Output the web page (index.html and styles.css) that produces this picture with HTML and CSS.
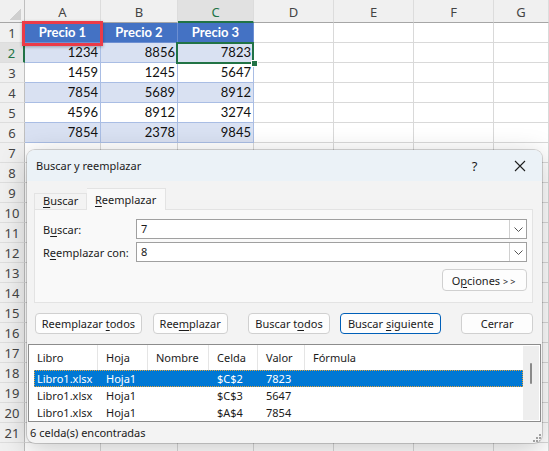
FILE: index.html
```html
<!DOCTYPE html>
<html lang="es">
<head>
    <meta charset="UTF-8">
    <title>Buscar y reemplazar</title>
    <link rel="stylesheet" href="styles.css">
</head>
<body>
    <div class="sheet">
        <div class="row head">
            <div class="corner"></div>
            <div>A</div><div>B</div><div class="sel">C</div><div>D</div><div>E</div><div>F</div><div>G</div>
        </div>
        <div class="row">
            <div class="rh">1</div>
            <div class="tc th">Precio 1</div><div class="tc th">Precio 2</div><div class="tc th">Precio 3</div>
            <div></div><div></div><div></div><div></div>
        </div>
        <div class="row band">
            <div class="rh act">2</div>
            <div class="tc">1234</div><div class="tc">8856</div><div class="tc">7823</div>
            <div></div><div></div><div></div><div></div>
        </div>
        <div class="row">
            <div class="rh">3</div>
            <div class="tc">1459</div><div class="tc">1245</div><div class="tc">5647</div>
            <div></div><div></div><div></div><div></div>
        </div>
        <div class="row band">
            <div class="rh">4</div>
            <div class="tc">7854</div><div class="tc">5689</div><div class="tc">8912</div>
            <div></div><div></div><div></div><div></div>
        </div>
        <div class="row">
            <div class="rh">5</div>
            <div class="tc">4596</div><div class="tc">8912</div><div class="tc">3274</div>
            <div></div><div></div><div></div><div></div>
        </div>
        <div class="row band">
            <div class="rh">6</div>
            <div class="tc">7854</div><div class="tc">2378</div><div class="tc">9845</div>
            <div></div><div></div><div></div><div></div>
        </div>
        <div class="row"><div class="rh">7</div><div></div><div></div><div></div><div></div><div></div><div></div><div></div></div>
        <div class="row"><div class="rh">8</div><div></div><div></div><div></div><div></div><div></div><div></div><div></div></div>
        <div class="row"><div class="rh">9</div><div></div><div></div><div></div><div></div><div></div><div></div><div></div></div>
        <div class="row"><div class="rh">10</div><div></div><div></div><div></div><div></div><div></div><div></div><div></div></div>
        <div class="row"><div class="rh">11</div><div></div><div></div><div></div><div></div><div></div><div></div><div></div></div>
        <div class="row"><div class="rh">12</div><div></div><div></div><div></div><div></div><div></div><div></div><div></div></div>
        <div class="row"><div class="rh">13</div><div></div><div></div><div></div><div></div><div></div><div></div><div></div></div>
        <div class="row"><div class="rh">14</div><div></div><div></div><div></div><div></div><div></div><div></div><div></div></div>
        <div class="row"><div class="rh">15</div><div></div><div></div><div></div><div></div><div></div><div></div><div></div></div>
        <div class="row"><div class="rh">16</div><div></div><div></div><div></div><div></div><div></div><div></div><div></div></div>
        <div class="row"><div class="rh">17</div><div></div><div></div><div></div><div></div><div></div><div></div><div></div></div>
        <div class="row"><div class="rh">18</div><div></div><div></div><div></div><div></div><div></div><div></div><div></div></div>
        <div class="row"><div class="rh">19</div><div></div><div></div><div></div><div></div><div></div><div></div><div></div></div>
        <div class="row"><div class="rh">20</div><div></div><div></div><div></div><div></div><div></div><div></div><div></div></div>
        <div class="row"><div class="rh">21</div><div></div><div></div><div></div><div></div><div></div><div></div><div></div></div>
        <div class="row"><div class="rh"></div><div></div><div></div><div></div><div></div><div></div><div></div><div></div></div>

        <!-- overlays: highlighted header and active cell -->
        <div class="mark"></div>
        <div class="cursor"></div>
        <div class="handle"></div>
    </div>

    <div class="dlg">
        <div class="dlg-title">
            <span class="dlg-name">Buscar y reemplazar</span>
            <span class="tbtn help">?</span>
            <span class="tbtn">
                <svg width="12" height="12" viewBox="0 0 12 12"><path d="M1 1L11 11M11 1L1 11" stroke="#1f1f1f" stroke-width="1.1" fill="none"/></svg>
            </span>
        </div>

        <div class="dlg-main">
            <div class="tabs">
                <div class="tab"><u>B</u>uscar</div>
                <div class="tab on"><u>R</u>eemplazar</div>
            </div>
            <div class="panel">
                <div class="field">
                    <label>B<u>u</u>scar:</label>
                    <div class="combo">
                        <span class="val">7</span>
                        <span class="drop"><svg width="9" height="5" viewBox="0 0 9 5"><path d="M0.5 0.5L4.5 4.5L8.5 0.5" stroke="#555" fill="none"/></svg></span>
                    </div>
                </div>
                <div class="field">
                    <label>R<u>e</u>emplazar con:</label>
                    <div class="combo">
                        <span class="val">8</span>
                        <span class="drop"><svg width="9" height="5" viewBox="0 0 9 5"><path d="M0.5 0.5L4.5 4.5L8.5 0.5" stroke="#555" fill="none"/></svg></span>
                    </div>
                </div>
                <div class="opts">
                    <button class="btn btn-opts">O<u>p</u>ciones <span class="gt">&gt;&gt;</span></button>
                </div>
            </div>
            <div class="actions">
                <button class="btn b-all">Reemplazar <u>t</u>odos</button>
                <button class="btn b-rep">Ree<u>m</u>plazar</button>
                <button class="btn b-find">Buscar t<u>o</u>dos</button>
                <button class="btn b-next">Buscar <u>s</u>iguiente</button>
                <button class="btn b-close">Cerrar</button>
            </div>
        </div>

        <div class="results">
            <div class="res-body">
                <div class="res-head">
                    <span>Libro</span><span>Hoja</span><span>Nombre</span><span>Celda</span><span>Valor</span><span>Fórmula</span>
                </div>
                <div class="res-row sel">
                    <span>Libro1.xlsx</span><span>Hoja1</span><span></span><span>$C$2</span><span>7823</span><span></span>
                </div>
                <div class="res-row">
                    <span>Libro1.xlsx</span><span>Hoja1</span><span></span><span>$C$3</span><span>5647</span><span></span>
                </div>
                <div class="res-row">
                    <span>Libro1.xlsx</span><span>Hoja1</span><span></span><span>$A$4</span><span>7854</span><span></span>
                </div>
            </div>
            <div class="vscroll"><div class="thumb"></div></div>
        </div>

        <div class="status">
            <span>6 celda(s) encontradas</span>
            <svg class="grip" width="10" height="10" viewBox="0 0 10 10">
                <rect x="8" y="2" width="2" height="2" fill="#a0a0a0"/>
                <rect x="5" y="5" width="2" height="2" fill="#a0a0a0"/>
                <rect x="8" y="5" width="2" height="2" fill="#a0a0a0"/>
                <rect x="2" y="8" width="2" height="2" fill="#a0a0a0"/>
                <rect x="5" y="8" width="2" height="2" fill="#a0a0a0"/>
                <rect x="8" y="8" width="2" height="2" fill="#a0a0a0"/>
            </svg>
        </div>
    </div>
</body>
</html>
```

FILE: styles.css
```css
:root {
    --grid-line: #d9d9d9;
    --head-bg: #f0f0f0;
    --head-text: #444444;
    --excel-green: #217346;
    --table-blue: #4472c4;
    --table-band: #d9e1f2;
    --table-line: #a9bde4;
    --dlg-bg: #f3f3f3;
    --ui-text: #1b1b1b;
}

* {
    box-sizing: border-box;
    margin: 0;
    padding: 0;
}

html, body {
    width: 549px;
    height: 451px;
    overflow: hidden;
    background: #ffffff;
}

body {
    position: relative;
    font-family: "Segoe UI", "Noto Sans", sans-serif;
    color: var(--ui-text);
}

/* ---------- worksheet ---------- */

.sheet {
    position: relative;
}

.row {
    display: grid;
    grid-template-columns: 25px 76px 77px 76px 80px 80px 80px 1fr;
    height: 20px;
}

.row > div {
    border-right: 1px solid var(--grid-line);
    border-bottom: 1px solid var(--grid-line);
    font-family: Lato, "Liberation Sans", sans-serif;
    font-size: 13px;
    line-height: 19px;
    white-space: nowrap;
    overflow: hidden;
}

.row.head {
    height: 23px;
}

.row.head > div {
    background: var(--head-bg);
    border-bottom: 1px solid #a6a6a6;
    border-right-color: #dcdcdc;
    font-family: "Segoe UI", "Noto Sans", sans-serif;
    font-size: 13px;
    color: var(--head-text);
    text-align: center;
    line-height: 24px;
}

.row.head > div.sel {
    background: #e1e1e1;
    color: var(--excel-green);
    border-bottom: 2px solid var(--excel-green);
}

.row.head > .corner {
    position: relative;
    border-right-color: #bfbfbf;
}

.corner::after {
    content: "";
    position: absolute;
    right: 3px;
    bottom: 2px;
    width: 11px;
    height: 11px;
    background: linear-gradient(135deg, transparent 50%, #cfcfcf 50%);
}

.row > .rh {
    background: var(--head-bg);
    border-right-color: #bfbfbf;
    border-bottom-color: #dddddd;
    font-family: "Segoe UI", "Noto Sans", sans-serif;
    font-size: 13px;
    color: var(--head-text);
    text-align: center;
    line-height: 20px;
}

.row > .rh.act {
    color: var(--excel-green);
    border-right: 2px solid var(--excel-green);
    background: #e1e1e1;
}

.row > .tc {
    border-color: var(--table-line);
    text-align: right;
    padding-right: 2px;
    color: #111111;
}

.row.band > .tc {
    background: var(--table-band);
}

.row > .th {
    background: var(--table-blue);
    border-right-color: #6d8fd2;
    border-bottom-color: #6d8fd2;
    color: #ffffff;
    font-weight: 700;
    text-align: center;
    padding-right: 0;
}

.mark {
    position: absolute;
    left: 22px;
    top: 21px;
    width: 81px;
    height: 25px;
    border: 3px solid #ec3b48;
    box-shadow: 0 1px 3px rgba(0, 0, 0, 0.3);
}

.cursor {
    position: absolute;
    left: 176px;
    top: 42px;
    width: 78px;
    height: 22px;
    border: 2px solid var(--excel-green);
}

.handle {
    position: absolute;
    left: 251px;
    top: 60px;
    width: 7px;
    height: 7px;
    background: var(--excel-green);
    border: 1px solid #ffffff;
}

/* ---------- dialog ---------- */

.dlg {
    position: absolute;
    left: 27px;
    top: 150px;
    width: 515px;
    height: 293px;
    background: var(--dlg-bg);
    border-radius: 8px;
    overflow: hidden;
    display: flex;
    flex-direction: column;
    box-shadow: 0 0 0 1px rgba(0, 0, 0, 0.16), 0 6px 28px rgba(0, 0, 0, 0.22);
    font-size: 11px;
}

.dlg u {
    text-decoration-thickness: 1px;
    text-underline-offset: 2px;
}

.dlg-title {
    height: 31px;
    flex: none;
    display: flex;
    align-items: center;
    background: #ebf2f7;
    padding-left: 9px;
}

.dlg-name {
    flex: 1;
    font-size: 11px;
}

.tbtn {
    width: 45px;
    height: 31px;
    display: flex;
    align-items: center;
    justify-content: center;
}

.tbtn.help {
    font-size: 13px;
}

.dlg-main {
    padding: 7px 9px 0 7px;
}

.tabs {
    display: flex;
    align-items: flex-end;
    height: 21px;
}

.tab {
    height: 16px;
    line-height: 14px;
    padding: 0 8px;
    border: 1px solid #e3e3e3;
    border-bottom: none;
    white-space: nowrap;
}

.tab:first-child {
    width: 53px;
}

.tab.on {
    position: relative;
    width: 79px;
    height: 22px;
    margin-bottom: -1px;
    padding-top: 3px;
    line-height: 16px;
    background: #f9f9f9;
    border-left: none;
}

.panel {
    width: 499px;
    height: 94px;
    background: #f9f9f9;
    border: 1px solid #e3e3e3;
    padding: 9px 5px 0 8px;
}

.field {
    display: flex;
    align-items: center;
    margin-bottom: 3px;
}

.field label {
    width: 93px;
    white-space: nowrap;
}

.combo {
    width: 391px;
    height: 20px;
    display: flex;
    background: #ffffff;
    border: 1px solid #a0a0a0;
}

.combo .val {
    flex: 1;
    padding-left: 4px;
    line-height: 18px;
}

.drop {
    width: 17px;
    display: flex;
    align-items: center;
    justify-content: center;
    border-left: 1px solid #d0d0d0;
}

.opts {
    display: flex;
    justify-content: flex-end;
    margin-top: 7px;
}

.btn {
    height: 21px;
    font: inherit;
    font-size: 11px;
    color: var(--ui-text);
    background: #fdfdfd;
    border: 1px solid #d0d0d0;
    border-radius: 4px;
    white-space: nowrap;
}

.btn-opts {
    width: 85px;
    height: 22px;
}

.gt {
    font-size: 9px;
    letter-spacing: 2px;
}

.actions {
    display: flex;
    margin-top: 10px;
}

.b-all { width: 107px; margin-left: 1px; }
.b-rep { width: 75px; margin-left: 11px; }
.b-find { width: 83px; margin-left: 20px; }
.b-next { width: 101px; margin-left: 10px; border-color: #005fb8; }
.b-close { width: 72px; margin-left: 20px; }

.results {
    display: flex;
    width: 513px;
    height: 78px;
    margin: 10px 0 0 1px;
    background: #ffffff;
    border: 1px solid #8c8c8c;
}

.res-body {
    flex: 1;
}

.res-head {
    display: grid;
    grid-template-columns: 69px 50px 61px 49px 47px 1fr;
    height: 25px;
}

.res-head span {
    padding-left: 8px;
    line-height: 25px;
    border-right: 1px solid #e5e5e5;
}

.res-head span:last-child {
    border-right: none;
}

.res-row {
    display: grid;
    grid-template-columns: 64px 50px 61px 49px 47px 1fr;
    height: 17px;
    margin-left: 5px;
    line-height: 17px;
}

.res-row span {
    padding-left: 8px;
    white-space: nowrap;
}

.res-row span:first-child {
    padding-left: 3px;
}

.res-row.sel {
    background: #0078d4;
    color: #ffffff;
    outline: 1px dotted #e3a33b;
    outline-offset: -1px;
}

.vscroll {
    width: 16px;
    margin: 1px 1px 1px 0;
    background: #eeeeee;
    display: flex;
    justify-content: center;
    padding-top: 17px;
}

.thumb {
    width: 2px;
    height: 21px;
    border-radius: 1px;
    background: #8a8a8a;
}

.status {
    flex: 1;
    display: flex;
    align-items: center;
    padding-left: 3px;
}

.status span {
    flex: 1;
}

.grip {
    align-self: flex-end;
    margin: 0 1px 1px 0;
}
```
